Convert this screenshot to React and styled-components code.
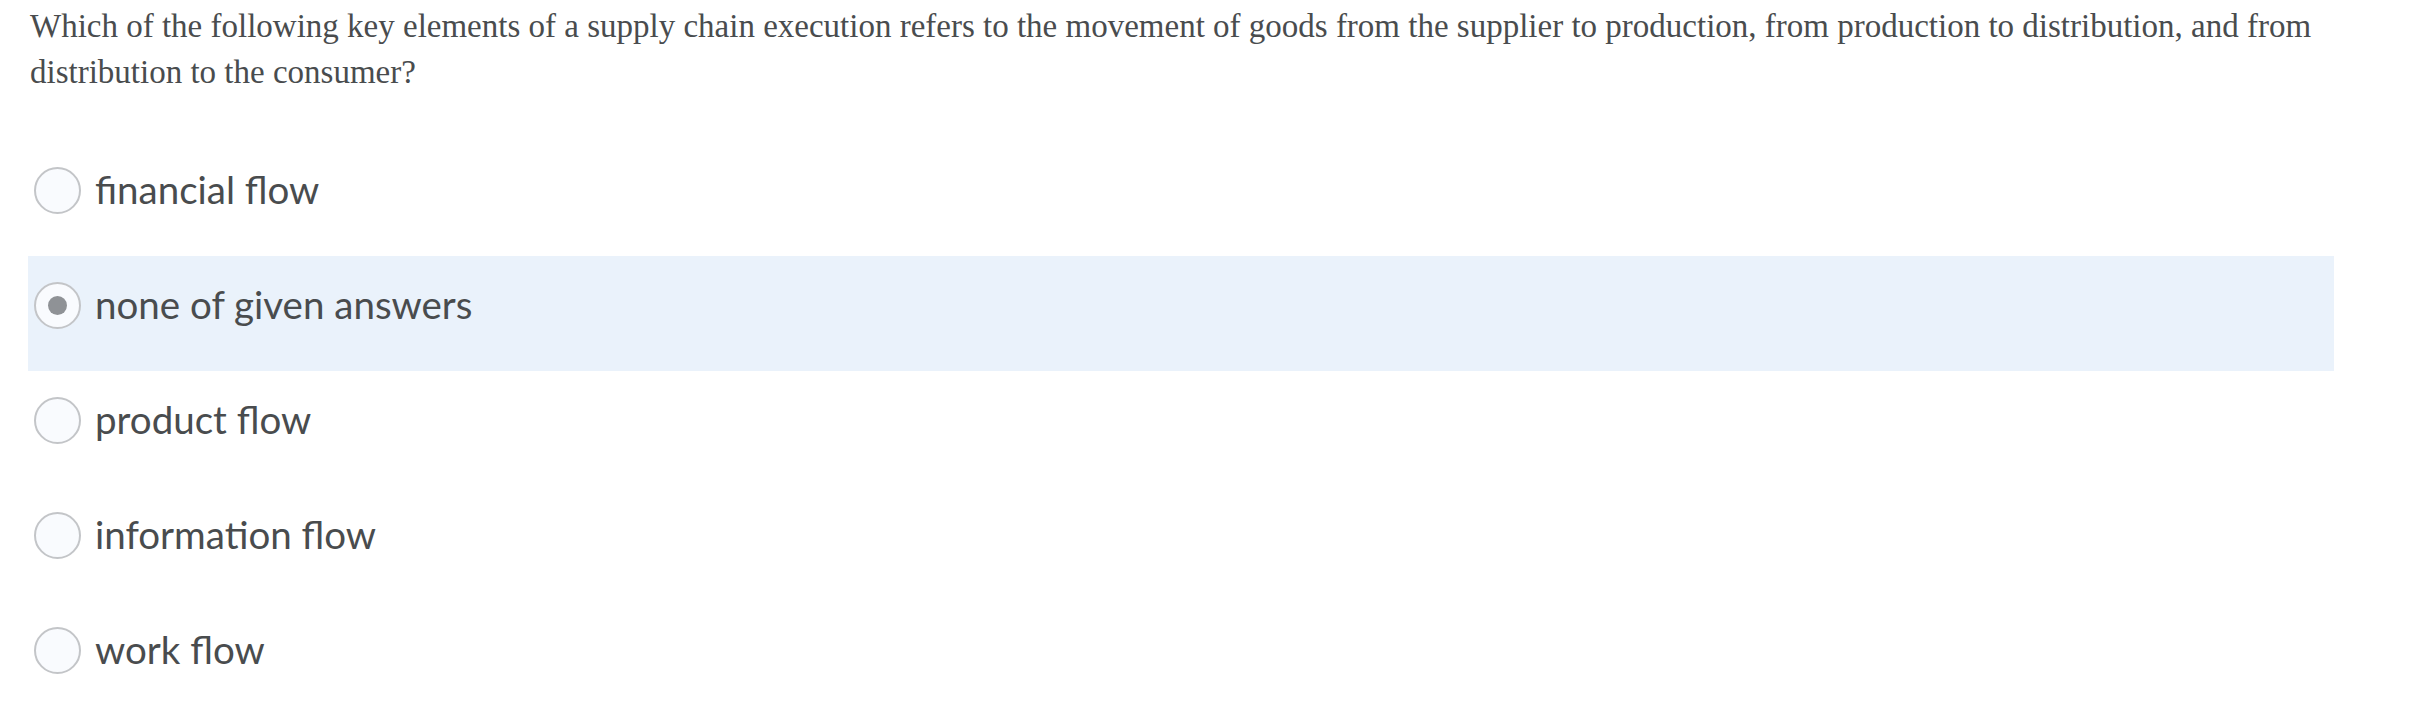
import React, { useState } from 'react';
import styled, { createGlobalStyle } from 'styled-components';

const GlobalStyle = createGlobalStyle`
  html, body {
    margin: 0;
    padding: 0;
    background: #fff;
  }
`;

const Container = styled.div`
  padding: 3px 80px 0 28px;
`;

const QuestionText = styled.p`
  margin: 0 0 46px 2px;
  font-family: "Liberation Serif", "Times New Roman", serif;
  font-size: 33px;
  line-height: 46px;
  color: #494c4e;
`;

const Options = styled.div`
  display: flex;
  flex-direction: column;
`;

const OptionRow = styled.label`
  display: flex;
  align-items: flex-start;
  gap: 14px;
  box-sizing: border-box;
  height: 115px;
  padding: 22px 6px 0;
  background: ${(p) => (p.selected ? '#eaf2fb' : 'transparent')};
  cursor: pointer;
`;

const Radio = styled.span`
  flex: none;
  box-sizing: border-box;
  width: 47px;
  height: 47px;
  margin-top: 4px;
  border-radius: 50%;
  border: 2px solid #c3c5c8;
  background: #f9fbfe;
  display: flex;
  align-items: center;
  justify-content: center;

  &::after {
    content: '';
    display: ${(p) => (p.checked ? 'block' : 'none')};
    width: 19px;
    height: 19px;
    border-radius: 50%;
    background: #8f9296;
  }
`;

const OptionLabel = styled.span`
  margin-top: 2px;
  font-family: Lato, "Open Sans", sans-serif;
  font-size: 38.5px;
  line-height: 48px;
  color: #494c4e;
`;

const answers = [
  'financial flow',
  'none of given answers',
  'product flow',
  'information flow',
  'work flow',
];

const App = () => {
  const [selected, setSelected] = useState(1);

  return (
    <Container>
      <GlobalStyle />
      <QuestionText>
        Which of the following key elements of a supply chain execution refers to the movement of goods from the supplier to production, from production to distribution, and from distribution to the consumer?
      </QuestionText>
      <Options>
        {answers.map((answer, i) => (
          <OptionRow key={answer} selected={i === selected} onClick={() => setSelected(i)}>
            <Radio checked={i === selected} />
            <OptionLabel>{answer}</OptionLabel>
          </OptionRow>
        ))}
      </Options>
    </Container>
  );
};

export default App;
